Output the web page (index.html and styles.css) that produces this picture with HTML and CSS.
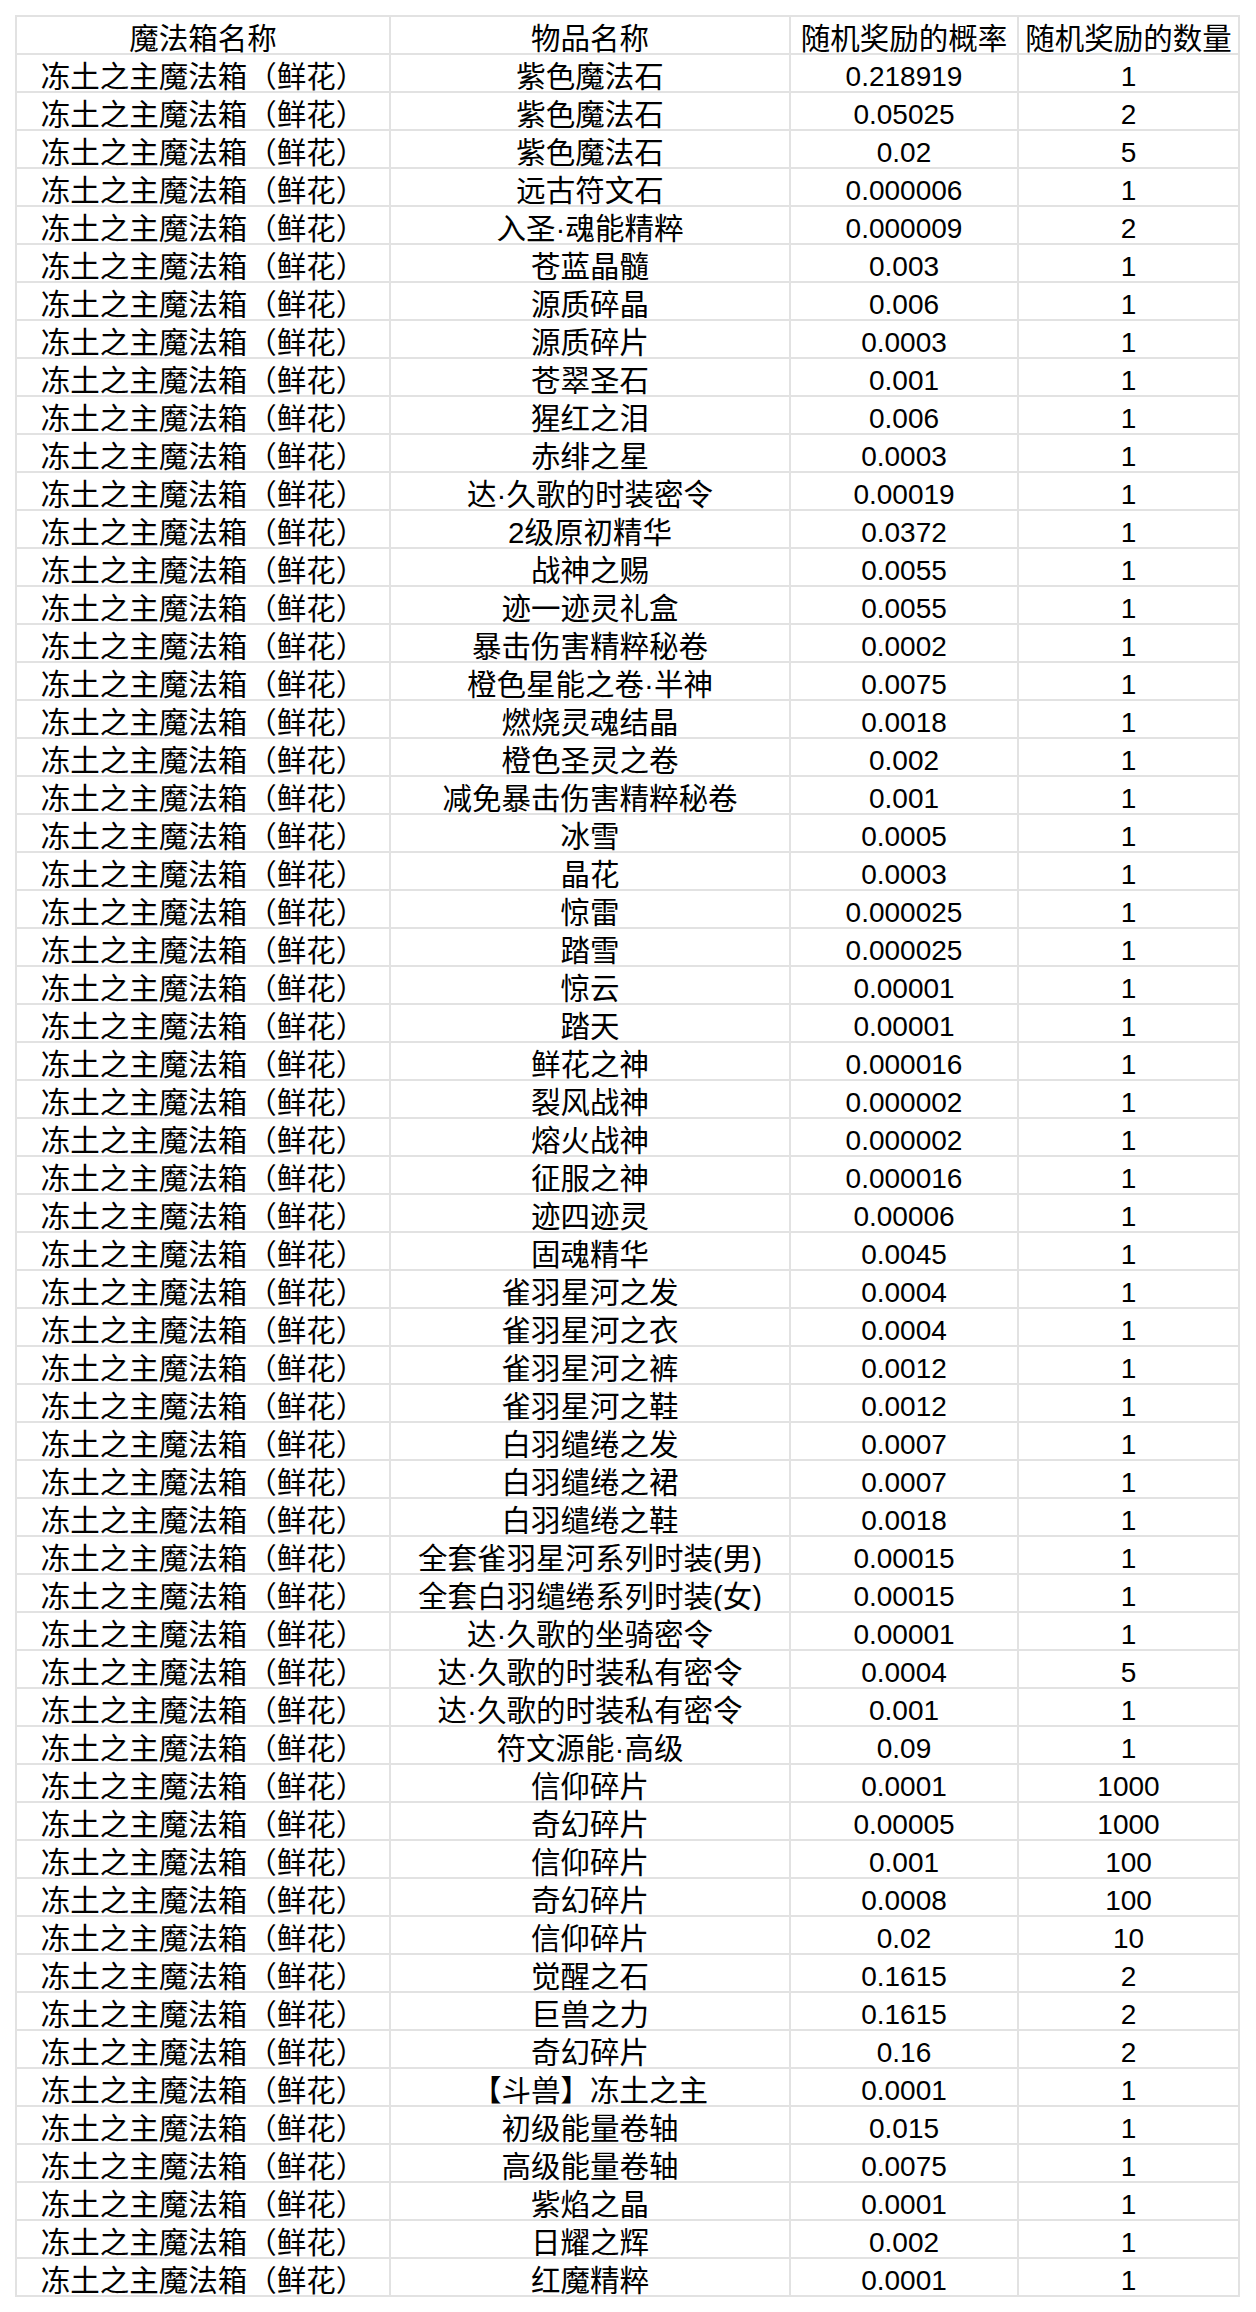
FILE: index.html
```html
<!DOCTYPE html>
<html lang="zh-CN">
<head>
<meta charset="utf-8">
<title>魔法箱</title>
<link rel="stylesheet" href="styles.css">
</head>
<body>
<table class="sheet">
<colgroup><col class="c1"><col class="c2"><col class="c3"><col class="c4"></colgroup>
<tbody>
<tr class="head"><td>魔法箱名称</td><td>物品名称</td><td>随机奖励的概率</td><td>随机奖励的数量</td></tr>
<tr><td>冻土之主魔法箱（鲜花）</td><td>紫色魔法石</td><td class="num">0.218919</td><td class="num">1</td></tr>
<tr><td>冻土之主魔法箱（鲜花）</td><td>紫色魔法石</td><td class="num">0.05025</td><td class="num">2</td></tr>
<tr><td>冻土之主魔法箱（鲜花）</td><td>紫色魔法石</td><td class="num">0.02</td><td class="num">5</td></tr>
<tr><td>冻土之主魔法箱（鲜花）</td><td>远古符文石</td><td class="num">0.000006</td><td class="num">1</td></tr>
<tr><td>冻土之主魔法箱（鲜花）</td><td>入圣·魂能精粹</td><td class="num">0.000009</td><td class="num">2</td></tr>
<tr><td>冻土之主魔法箱（鲜花）</td><td>苍蓝晶髓</td><td class="num">0.003</td><td class="num">1</td></tr>
<tr><td>冻土之主魔法箱（鲜花）</td><td>源质碎晶</td><td class="num">0.006</td><td class="num">1</td></tr>
<tr><td>冻土之主魔法箱（鲜花）</td><td>源质碎片</td><td class="num">0.0003</td><td class="num">1</td></tr>
<tr><td>冻土之主魔法箱（鲜花）</td><td>苍翠圣石</td><td class="num">0.001</td><td class="num">1</td></tr>
<tr><td>冻土之主魔法箱（鲜花）</td><td>猩红之泪</td><td class="num">0.006</td><td class="num">1</td></tr>
<tr><td>冻土之主魔法箱（鲜花）</td><td>赤绯之星</td><td class="num">0.0003</td><td class="num">1</td></tr>
<tr><td>冻土之主魔法箱（鲜花）</td><td>达·久歌的时装密令</td><td class="num">0.00019</td><td class="num">1</td></tr>
<tr><td>冻土之主魔法箱（鲜花）</td><td>2级原初精华</td><td class="num">0.0372</td><td class="num">1</td></tr>
<tr><td>冻土之主魔法箱（鲜花）</td><td>战神之赐</td><td class="num">0.0055</td><td class="num">1</td></tr>
<tr><td>冻土之主魔法箱（鲜花）</td><td>迹一迹灵礼盒</td><td class="num">0.0055</td><td class="num">1</td></tr>
<tr><td>冻土之主魔法箱（鲜花）</td><td>暴击伤害精粹秘卷</td><td class="num">0.0002</td><td class="num">1</td></tr>
<tr><td>冻土之主魔法箱（鲜花）</td><td>橙色星能之卷·半神</td><td class="num">0.0075</td><td class="num">1</td></tr>
<tr><td>冻土之主魔法箱（鲜花）</td><td>燃烧灵魂结晶</td><td class="num">0.0018</td><td class="num">1</td></tr>
<tr><td>冻土之主魔法箱（鲜花）</td><td>橙色圣灵之卷</td><td class="num">0.002</td><td class="num">1</td></tr>
<tr><td>冻土之主魔法箱（鲜花）</td><td>减免暴击伤害精粹秘卷</td><td class="num">0.001</td><td class="num">1</td></tr>
<tr><td>冻土之主魔法箱（鲜花）</td><td>冰雪</td><td class="num">0.0005</td><td class="num">1</td></tr>
<tr><td>冻土之主魔法箱（鲜花）</td><td>晶花</td><td class="num">0.0003</td><td class="num">1</td></tr>
<tr><td>冻土之主魔法箱（鲜花）</td><td>惊雷</td><td class="num">0.000025</td><td class="num">1</td></tr>
<tr><td>冻土之主魔法箱（鲜花）</td><td>踏雪</td><td class="num">0.000025</td><td class="num">1</td></tr>
<tr><td>冻土之主魔法箱（鲜花）</td><td>惊云</td><td class="num">0.00001</td><td class="num">1</td></tr>
<tr><td>冻土之主魔法箱（鲜花）</td><td>踏天</td><td class="num">0.00001</td><td class="num">1</td></tr>
<tr><td>冻土之主魔法箱（鲜花）</td><td>鲜花之神</td><td class="num">0.000016</td><td class="num">1</td></tr>
<tr><td>冻土之主魔法箱（鲜花）</td><td>裂风战神</td><td class="num">0.000002</td><td class="num">1</td></tr>
<tr><td>冻土之主魔法箱（鲜花）</td><td>熔火战神</td><td class="num">0.000002</td><td class="num">1</td></tr>
<tr><td>冻土之主魔法箱（鲜花）</td><td>征服之神</td><td class="num">0.000016</td><td class="num">1</td></tr>
<tr><td>冻土之主魔法箱（鲜花）</td><td>迹四迹灵</td><td class="num">0.00006</td><td class="num">1</td></tr>
<tr><td>冻土之主魔法箱（鲜花）</td><td>固魂精华</td><td class="num">0.0045</td><td class="num">1</td></tr>
<tr><td>冻土之主魔法箱（鲜花）</td><td>雀羽星河之发</td><td class="num">0.0004</td><td class="num">1</td></tr>
<tr><td>冻土之主魔法箱（鲜花）</td><td>雀羽星河之衣</td><td class="num">0.0004</td><td class="num">1</td></tr>
<tr><td>冻土之主魔法箱（鲜花）</td><td>雀羽星河之裤</td><td class="num">0.0012</td><td class="num">1</td></tr>
<tr><td>冻土之主魔法箱（鲜花）</td><td>雀羽星河之鞋</td><td class="num">0.0012</td><td class="num">1</td></tr>
<tr><td>冻土之主魔法箱（鲜花）</td><td>白羽缱绻之发</td><td class="num">0.0007</td><td class="num">1</td></tr>
<tr><td>冻土之主魔法箱（鲜花）</td><td>白羽缱绻之裙</td><td class="num">0.0007</td><td class="num">1</td></tr>
<tr><td>冻土之主魔法箱（鲜花）</td><td>白羽缱绻之鞋</td><td class="num">0.0018</td><td class="num">1</td></tr>
<tr><td>冻土之主魔法箱（鲜花）</td><td>全套雀羽星河系列时装(男)</td><td class="num">0.00015</td><td class="num">1</td></tr>
<tr><td>冻土之主魔法箱（鲜花）</td><td>全套白羽缱绻系列时装(女)</td><td class="num">0.00015</td><td class="num">1</td></tr>
<tr><td>冻土之主魔法箱（鲜花）</td><td>达·久歌的坐骑密令</td><td class="num">0.00001</td><td class="num">1</td></tr>
<tr><td>冻土之主魔法箱（鲜花）</td><td>达·久歌的时装私有密令</td><td class="num">0.0004</td><td class="num">5</td></tr>
<tr><td>冻土之主魔法箱（鲜花）</td><td>达·久歌的时装私有密令</td><td class="num">0.001</td><td class="num">1</td></tr>
<tr><td>冻土之主魔法箱（鲜花）</td><td>符文源能·高级</td><td class="num">0.09</td><td class="num">1</td></tr>
<tr><td>冻土之主魔法箱（鲜花）</td><td>信仰碎片</td><td class="num">0.0001</td><td class="num">1000</td></tr>
<tr><td>冻土之主魔法箱（鲜花）</td><td>奇幻碎片</td><td class="num">0.00005</td><td class="num">1000</td></tr>
<tr><td>冻土之主魔法箱（鲜花）</td><td>信仰碎片</td><td class="num">0.001</td><td class="num">100</td></tr>
<tr><td>冻土之主魔法箱（鲜花）</td><td>奇幻碎片</td><td class="num">0.0008</td><td class="num">100</td></tr>
<tr><td>冻土之主魔法箱（鲜花）</td><td>信仰碎片</td><td class="num">0.02</td><td class="num">10</td></tr>
<tr><td>冻土之主魔法箱（鲜花）</td><td>觉醒之石</td><td class="num">0.1615</td><td class="num">2</td></tr>
<tr><td>冻土之主魔法箱（鲜花）</td><td>巨兽之力</td><td class="num">0.1615</td><td class="num">2</td></tr>
<tr><td>冻土之主魔法箱（鲜花）</td><td>奇幻碎片</td><td class="num">0.16</td><td class="num">2</td></tr>
<tr><td>冻土之主魔法箱（鲜花）</td><td>【斗兽】冻土之主</td><td class="num">0.0001</td><td class="num">1</td></tr>
<tr><td>冻土之主魔法箱（鲜花）</td><td>初级能量卷轴</td><td class="num">0.015</td><td class="num">1</td></tr>
<tr><td>冻土之主魔法箱（鲜花）</td><td>高级能量卷轴</td><td class="num">0.0075</td><td class="num">1</td></tr>
<tr><td>冻土之主魔法箱（鲜花）</td><td>紫焰之晶</td><td class="num">0.0001</td><td class="num">1</td></tr>
<tr><td>冻土之主魔法箱（鲜花）</td><td>日耀之辉</td><td class="num">0.002</td><td class="num">1</td></tr>
<tr><td>冻土之主魔法箱（鲜花）</td><td>红魔精粹</td><td class="num">0.0001</td><td class="num">1</td></tr>
</tbody>
</table>
</body>
</html>
```
FILE: styles.css
```css
html, body {
  margin: 0;
  padding: 0;
  background: #ffffff;
}
body {
  padding: 15px;
  font-family: "Liberation Sans", "Noto Sans CJK SC", sans-serif;
  color: #000000;
}
.sheet {
  border-collapse: separate;
  border-spacing: 0;
  table-layout: fixed;
  border-top: 2px solid #e2e2e2;
  border-left: 2px solid #e2e2e2;
}
.c1 { width: 374px; }
.c2 { width: 400px; }
.c3 { width: 228px; }
.c4 { width: 221px; }
.sheet td {
  height: 36px;
  padding: 0;
  border-right: 2px solid #e2e2e2;
  border-bottom: 2px solid #e2e2e2;
  text-align: center;
  vertical-align: bottom;
  white-space: nowrap;
  overflow: hidden;
  font-size: 29.5px;
  line-height: 1;
}
.sheet td.num {
  font-size: 28px;
}
```
